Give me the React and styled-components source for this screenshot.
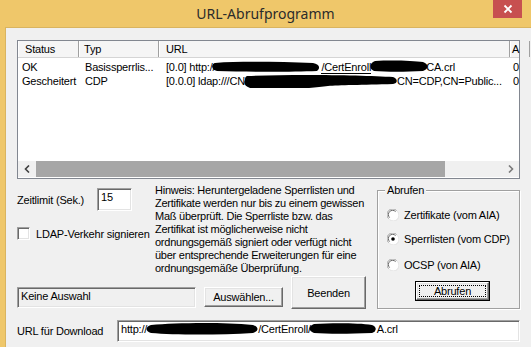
import styled, { createGlobalStyle, css } from 'styled-components';

const GlobalStyle = createGlobalStyle`
  html, body {
    margin: 0;
    padding: 0;
    background: #f0f0f0;
  }
  * {
    box-sizing: border-box;
  }
`;

const sunken = css`
  border-style: solid;
  border-width: 1px;
  border-color: #a0a0a0 #ffffff #ffffff #a0a0a0;
  box-shadow: inset 1px 1px 0 #696969, inset -1px -1px 0 #e3e3e3;
`;

const raised = css`
  border-style: solid;
  border-width: 1px;
  border-color: #ffffff #696969 #696969 #ffffff;
  box-shadow: inset -1px -1px 0 #a0a0a0, inset 1px 1px 0 #e3e3e3;
  background: #f0f0f0;
`;

const Window = styled.div`
  width: 531px;
  height: 347px;
  overflow: hidden;
  background: #efc76a;
  display: flex;
  flex-direction: column;
  font-family: 'Liberation Sans', Arial, sans-serif;
  font-size: 11px;
  letter-spacing: -0.2px;
  color: #000;
`;

const TitleBar = styled.div`
  height: 27px;
  flex: none;
  display: grid;
  grid-template-columns: 1fr auto 1fr;
  align-items: start;
`;

const Title = styled.div`
  grid-column: 2;
  font-family: 'Noto Sans', 'Open Sans', sans-serif;
  font-size: 14px;
  letter-spacing: 0;
  line-height: 27px;
  color: #2b2b2b;
`;

const CloseButton = styled.div`
  grid-column: 3;
  justify-self: end;
  width: 29px;
  height: 18px;
  margin-right: 9px;
  background: #c75050;
  display: flex;
  align-items: center;
  justify-content: center;
`;

const Client = styled.div`
  flex: 1;
  margin-left: 5px;
  border-left: 1px solid #d9b460;
  border-top: 1px solid #d9b460;
  background: #f0f0f0;
  padding: 12px 0 0 11px;
  display: flex;
  flex-direction: column;
`;

/* ---------- list view ---------- */

const ListView = styled.div`
  width: 503px;
  height: 139px;
  border: 1px solid #828790;
  background: #fff;
  display: flex;
  flex-direction: column;
  flex: none;
`;

const Header = styled.div`
  height: 17px;
  display: flex;
  flex: none;
  background: #f5f5f5;
  border-bottom: 1px solid #d5d5d5;
`;

const HeaderCell = styled.div`
  width: ${({ $w }) => $w}px;
  flex: none;
  padding-left: ${({ $pad }) => $pad}px;
  line-height: 16px;
  border-right: 1px solid #a0a0a0;
  box-shadow: inset 1px 0 0 #ffffff;
  white-space: nowrap;
  overflow: hidden;
`;

const Rows = styled.div`
  flex: 1;
  padding-top: 2px;
  overflow: hidden;
`;

const Row = styled.div`
  display: flex;
  height: 14px;
  line-height: 14px;
`;

const Cell = styled.div`
  width: ${({ $w }) => $w}px;
  flex: none;
  padding-left: ${({ $pad }) => $pad}px;
  white-space: nowrap;
  overflow: hidden;
`;

const Scribble = styled.span`
  display: inline-block;
  vertical-align: top;
  width: ${({ $w }) => $w}px;
  height: 14px;
  margin-left: ${({ $ml }) => $ml || 0}px;
  margin-right: ${({ $mr }) => $mr || 0}px;
  position: relative;
  z-index: 1;

  svg {
    display: block;
    overflow: visible;
  }
`;

const Underlined = styled.span`
  border-bottom: 1px solid #000;
`;

const HScroll = styled.div`
  height: 16px;
  flex: none;
  display: flex;
  background: #f0f0f0;
  margin-bottom: 1px;
`;

const ScrollArrow = styled.div`
  width: 17px;
  flex: none;
  display: flex;
  align-items: center;
  justify-content: center;
`;

const ScrollTrack = styled.div`
  flex: 1;
  display: flex;
  padding: 0 1px;
`;

const Thumb = styled.div`
  width: 409px;
  background: #a6a6a6;
`;

/* ---------- middle ---------- */

const Middle = styled.div`
  display: flex;
  gap: 7px;
  flex: none;
`;

const LeftArea = styled.div`
  width: 353px;
  display: flex;
  flex-direction: column;
`;

const TopRow = styled.div`
  height: 97px;
  display: flex;
`;

const Controls = styled.div`
  width: 138px;
  flex: none;
  padding-top: 9px;
  display: flex;
  flex-direction: column;
  gap: 16px;
`;

const FieldRow = styled.div`
  display: flex;
  align-items: center;
  gap: ${({ $gap }) => $gap}px;
`;

const TextBox = styled.div`
  ${sunken};
  width: ${({ $w }) => $w}px;
  height: ${({ $h }) => $h}px;
  margin-top: ${({ $mt }) => $mt || 0}px;
  background: ${({ $readonly }) => ($readonly ? '#f0f0f0' : '#fff')};
  padding: 1px 0 0 3px;
  line-height: 15px;
  white-space: nowrap;
  overflow: hidden;
  flex: none;
`;

const CheckRow = styled.label`
  display: flex;
  align-items: center;
  gap: 6px;
`;

const CheckBox = styled.span`
  ${sunken};
  width: 13px;
  height: 13px;
  background: #fff;
  flex: none;
`;

const Hint = styled.p`
  margin: 0;
  padding-top: 5px;
  line-height: 13px;
  letter-spacing: -0.25px;
  white-space: nowrap;
`;

const ButtonRow = styled.div`
  display: flex;
  align-items: flex-start;
  gap: 8px;
  height: 33px;
`;

const Button = styled.div`
  ${raised};
  width: ${({ $w }) => $w}px;
  height: ${({ $h }) => $h}px;
  margin-top: ${({ $mt }) => $mt || 0}px;
  display: flex;
  align-items: center;
  justify-content: center;
  flex: none;
`;

const DefaultButton = styled.div`
  width: 75px;
  height: 20px;
  border: 1px solid #000;
  margin: 9px 0 0 28px;
  display: flex;
  flex: none;
`;

const DefaultInner = styled.div`
  ${raised};
  flex: 1;
  padding: 2px;
  display: flex;
`;

const FocusRect = styled.div`
  flex: 1;
  border: 1px dotted #000;
  display: flex;
  align-items: center;
  justify-content: center;
  line-height: 10px;
`;

const GroupBox = styled.div`
  width: 143px;
  height: 119px;
  margin-top: 11px;
  border: 1px solid #a0a0a0;
  box-shadow: inset 1px 1px 0 #fff, 1px 1px 0 #fff;
  position: relative;
  padding: 17px 0 0 9px;
  display: flex;
  flex-direction: column;
`;

const GroupLabel = styled.span`
  position: absolute;
  top: -7px;
  left: 7px;
  padding: 0 2px;
  background: #f0f0f0;
  line-height: 13px;
`;

const RadioRow = styled.label`
  display: flex;
  align-items: center;
  gap: 5px;
  height: 14px;
  margin-bottom: ${({ $mb }) => $mb}px;
`;

const UrlRow = styled.div`
  display: flex;
  align-items: center;
  margin-top: 11px;
`;

const UrlLabel = styled.span`
  width: 100px;
  flex: none;
`;

const Radio = ({ checked }) => (
  <svg width="12" height="12" viewBox="0 0 12 12">
    <circle cx="6" cy="6" r="5.5" fill="#fff" />
    <path d="M1.6 9.6 A5.2 5.2 0 0 1 9.6 1.6" fill="none" stroke="#a0a0a0" strokeWidth="1" />
    <path d="M2.6 8.6 A4.2 4.2 0 0 1 8.6 2.6" fill="none" stroke="#696969" strokeWidth="1" />
    <path d="M10.4 2.4 A5.2 5.2 0 0 1 2.4 10.4" fill="none" stroke="#e3e3e3" strokeWidth="1" />
    {checked && <circle cx="6" cy="6" r="1.8" fill="#000" />}
  </svg>
);

const Blob = ({ w, d }) => (
  <svg width={w} height="14" viewBox={`0 0 ${w} 14`}>
    <path d={d} fill="#000" />
  </svg>
);

export default function App() {
  return (
    <>
      <GlobalStyle />
      <Window>
        <TitleBar>
          <Title>URL-Abrufprogramm</Title>
          <CloseButton>
            <svg width="10" height="10" viewBox="0 0 10 10">
              <path d="M1.5 1.5 L8.5 8.5 M8.5 1.5 L1.5 8.5" stroke="#fff" strokeWidth="1.8" />
            </svg>
          </CloseButton>
        </TitleBar>

        <Client>
          <ListView>
            <Header>
              <HeaderCell $w={61} $pad={7}>Status</HeaderCell>
              <HeaderCell $w={80} $pad={5}>Typ</HeaderCell>
              <HeaderCell $w={351} $pad={7}>URL</HeaderCell>
              <HeaderCell $w={20} $pad={2}>A</HeaderCell>
            </Header>
            <Rows>
              <Row>
                <Cell $w={62} $pad={4}>OK</Cell>
                <Cell $w={80} $pad={5}>Basissperrlis...</Cell>
                <Cell $w={351} $pad={6}>
                  [0.0] http://
                  <Scribble $w={110} $ml={-4}>
                    <Blob w={110} d="M4 3 C30 1 70 2 102 3 C108 4 110 8 106 11 C80 12 40 12 6 11 C0 10 0 4 4 3 Z" />
                  </Scribble>
                  <Underlined>/CertEnroll</Underlined>
                  <Scribble $w={60} $ml={-2} $mr={-3}>
                    <Blob w={60} d="M6 1 C25 0 45 1 54 2 C60 4 60 9 54 11 C36 12 18 12 5 11 C0 9 0 3 6 1 Z" />
                  </Scribble>
                  CA.crl
                </Cell>
                <Cell $w={12} $pad={2}>0</Cell>
              </Row>
              <Row>
                <Cell $w={62} $pad={4}>Gescheitert</Cell>
                <Cell $w={80} $pad={5}>CDP</Cell>
                <Cell $w={351} $pad={6}>
                  [0.0.0] ldap:///CN
                  <Scribble $w={154} $ml={-2}>
                    <Blob w={154} d="M4 2 C50 0 120 1 150 3 C155 5 155 9 150 10 C120 11 95 11 85 12 C65 15 30 16 12 15 C2 14 0 9 2 6 C2 4 2 3 4 2 Z" />
                  </Scribble>
                  CN=CDP,CN=Public...
                </Cell>
                <Cell $w={12} $pad={2}>0</Cell>
              </Row>
            </Rows>
            <HScroll>
              <ScrollArrow>
                <svg width="6" height="8" viewBox="0 0 6 8">
                  <path d="M5 0.5 L1.5 4 L5 7.5" fill="none" stroke="#404040" strokeWidth="1.6" />
                </svg>
              </ScrollArrow>
              <ScrollTrack>
                <Thumb />
              </ScrollTrack>
              <ScrollArrow>
                <svg width="6" height="8" viewBox="0 0 6 8">
                  <path d="M1 0.5 L4.5 4 L1 7.5" fill="none" stroke="#7a7a7a" strokeWidth="1.6" />
                </svg>
              </ScrollArrow>
            </HScroll>
          </ListView>

          <Middle>
            <LeftArea>
              <TopRow>
                <Controls>
                  <FieldRow $gap={13}>
                    <span>Zeitlimit (Sek.)</span>
                    <TextBox $w={35} $h={23}>15</TextBox>
                  </FieldRow>
                  <CheckRow>
                    <CheckBox />
                    <span>LDAP-Verkehr signieren</span>
                  </CheckRow>
                </Controls>
                <Hint>
                  Hinweis: Heruntergeladene Sperrlisten und<br />
                  Zertifikate werden nur bis zu einem gewissen<br />
                  Maß überprüft. Die Sperrliste bzw. das<br />
                  Zertifikat ist möglicherweise nicht<br />
                  ordnungsgemäß signiert oder verfügt nicht<br />
                  über entsprechende Erweiterungen für eine<br />
                  ordnungsgemäße Überprüfung.
                </Hint>
              </TopRow>
              <ButtonRow>
                <TextBox $w={179} $h={21} $mt={11} $readonly>Keine Auswahl</TextBox>
                <Button $w={79} $h={20} $mt={11}>Auswählen...</Button>
                <Button $w={75} $h={33}>Beenden</Button>
              </ButtonRow>
            </LeftArea>

            <GroupBox>
              <GroupLabel>Abrufen</GroupLabel>
              <RadioRow $mb={10}>
                <Radio />
                <span>Zertifikate (vom AIA)</span>
              </RadioRow>
              <RadioRow $mb={12}>
                <Radio checked />
                <span>Sperrlisten (vom CDP)</span>
              </RadioRow>
              <RadioRow $mb={0}>
                <Radio />
                <span>OCSP (von AIA)</span>
              </RadioRow>
              <DefaultButton>
                <DefaultInner>
                  <FocusRect>Abrufen</FocusRect>
                </DefaultInner>
              </DefaultButton>
            </GroupBox>
          </Middle>

          <UrlRow>
            <UrlLabel>URL für Download</UrlLabel>
            <TextBox $w={403} $h={22}>
              http://
              <Scribble $w={113} $ml={-2}>
                <Blob w={113} d="M6 3 C30 1 75 0 108 3 C114 5 114 9 108 11 C75 13 30 13 6 11 C0 9 0 5 6 3 Z" />
              </Scribble>
              /CertEnroll/
              <Scribble $w={69} $ml={-3}>
                <Blob w={69} d="M6 2 C25 1 50 1 64 3 C69 5 69 9 64 11 C40 12 20 12 6 11 C0 9 0 4 6 2 Z" />
              </Scribble>
              A.crl
            </TextBox>
          </UrlRow>
        </Client>
      </Window>
    </>
  );
}
